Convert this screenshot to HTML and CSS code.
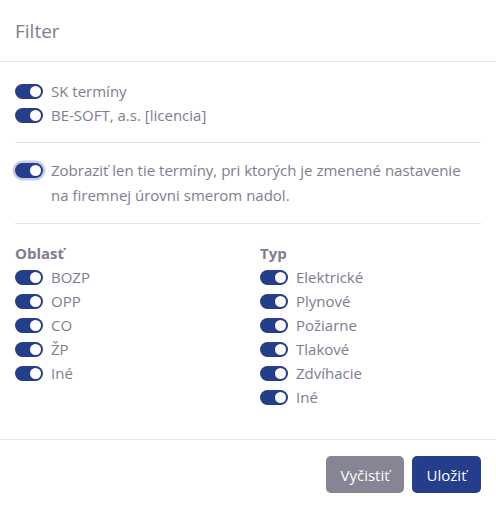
FILE: index.html
```html
<!DOCTYPE html>
<html lang="sk">
<head>
<meta charset="utf-8">
<link rel="stylesheet" href="styles.css">
</head>
<body>
<div class="modal">
  <div class="modal-header"><h2 class="title">Filter</h2></div>
  <div class="modal-body">
    <div class="list">
      <label class="row"><span class="switch"></span><span>SK termíny</span></label>
      <label class="row"><span class="switch"></span><span>BE-SOFT, a.s. [licencia]</span></label>
    </div>
    <hr class="sep">
    <label class="row wrap"><span class="switch focus"></span><span>Zobraziť len tie termíny, pri ktorých je zmenené nastavenie na firemnej úrovni smerom nadol.</span></label>
    <hr class="sep">
    <div class="cols">
      <div class="col">
        <div class="heading">Oblasť</div>
        <label class="row"><span class="switch"></span><span>BOZP</span></label>
        <label class="row"><span class="switch"></span><span>OPP</span></label>
        <label class="row"><span class="switch"></span><span>CO</span></label>
        <label class="row"><span class="switch"></span><span>ŽP</span></label>
        <label class="row"><span class="switch"></span><span>Iné</span></label>
      </div>
      <div class="col">
        <div class="heading">Typ</div>
        <label class="row"><span class="switch"></span><span>Elektrické</span></label>
        <label class="row"><span class="switch"></span><span>Plynové</span></label>
        <label class="row"><span class="switch"></span><span>Požiarne</span></label>
        <label class="row"><span class="switch"></span><span>Tlakové</span></label>
        <label class="row"><span class="switch"></span><span>Zdvíhacie</span></label>
        <label class="row"><span class="switch"></span><span>Iné</span></label>
      </div>
    </div>
  </div>
  <div class="modal-footer">
    <button class="btn btn-gray">Vyčistiť</button>
    <button class="btn btn-blue">Uložiť</button>
  </div>
</div>
</body>
</html>
```
FILE: styles.css
```css
html, body { margin: 0; padding: 0; background: #fff; }
body {
  font-family: "Open Sans", "Noto Sans", sans-serif;
  font-size: 15px;
  color: #7e7e90;
}
.modal { width: 496px; height: 511px; display: flex; flex-direction: column; }
.modal-header {
  border-bottom: 1px solid #e4e3ee;
  padding: 0 15px;
  display: flex;
  align-items: center;
  box-sizing: border-box;
  height: 62px;
}
.title { margin: 0; font-size: 19px; font-weight: 400; color: #7e7e90; }
.modal-body { padding: 17px 15px 0; flex: 1; }
.row {
  display: flex;
  align-items: flex-start;
  gap: 8px;
  line-height: 24px;
}
.row.wrap { line-height: 25px; }
.switch {
  flex: none;
  width: 28px;
  height: 15px;
  border-radius: 8px;
  background: #243e8c;
  position: relative;
  margin-top: 4.5px;
}
.row.wrap .switch { margin-top: 5px; }
.switch::after {
  content: "";
  position: absolute;
  right: 2px;
  top: 2px;
  width: 11px;
  height: 11px;
  border-radius: 50%;
  background: #fff;
}
.switch.focus { box-shadow: 0 0 0 2.5px #c8cde3; }
.sep {
  border: 0;
  border-top: 1px solid #e3e3e6;
  margin: 15px 0 15px;
}
.cols { display: grid; grid-template-columns: 245px 1fr; margin-top: 17px; }
.heading { font-weight: 700; line-height: 24px; }
.modal-footer {
  border-top: 1px solid #e4e3ee;
  height: 72px;
  box-sizing: border-box;
  display: flex;
  justify-content: flex-end;
  align-items: flex-start;
  gap: 8px;
  padding: 16px 15px 0;
}
.btn {
  font-family: inherit;
  font-size: 15px;
  color: #fff;
  border: 0;
  border-radius: 5px;
  height: 37px;
  padding: 0 14.5px;
}
.btn-gray { background: #858594; }
.btn-blue { background: #243e8c; }
```
